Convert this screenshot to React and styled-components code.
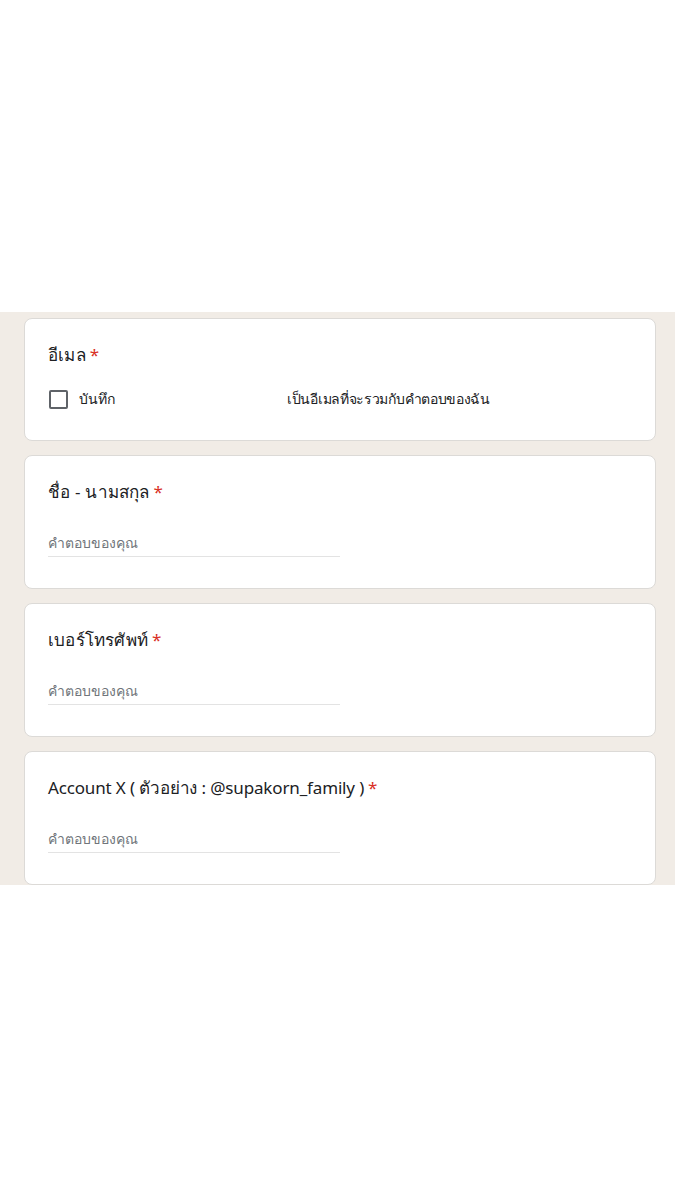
import React from "react";
import styled, { createGlobalStyle } from "styled-components";

const Global = createGlobalStyle`
  html, body {
    margin: 0;
    padding: 0;
    background: #ffffff;
  }
  body {
    font-family: "Noto Sans", "Liberation Sans", sans-serif;
  }
`;

const Page = styled.div`
  width: 675px;
  height: 1200px;
  background: #ffffff;
  padding-top: 312px;
  box-sizing: border-box;
`;

const Form = styled.div`
  background: #f1ece6;
  padding: 6px 19px 0 24px;
  display: flex;
  flex-direction: column;
  gap: 14px;
`;

const Card = styled.div`
  background: #ffffff;
  border: 1px solid #dcdad7;
  border-radius: 8px;
  height: ${(p) => p.h}px;
  box-sizing: border-box;
  padding: 24px 23px 0 23px;
  display: flex;
  flex-direction: column;
`;

const Title = styled.div`
  font-size: 17px;
  line-height: 24px;
  color: #202124;
  letter-spacing: ${(p) => (p.narrow ? "-0.15px" : "0.2px")};
`;

const Star = styled.span`
  color: #d93025;
  margin-left: 4px;
`;

const CheckRow = styled.div`
  display: flex;
  align-items: center;
  margin-top: 20px;
  height: 24px;
`;

const Box = styled.span`
  width: 15px;
  height: 15px;
  border: 2px solid #5f6368;
  border-radius: 2px;
  margin-left: 1px;
`;

const CheckLabel = styled.span`
  font-size: 14px;
  color: #202124;
  margin-left: 11px;
  width: 208px;
`;

const Note = styled.span`
  font-size: 14px;
  color: #202124;
  letter-spacing: -0.3px;
`;

const Input = styled.div`
  margin-top: 29px;
  width: 292px;
  border-bottom: 1px solid #e3e3e3;
  padding-bottom: 3px;
  font-size: 14px;
  line-height: 20px;
  color: #70757a;
`;

const Question = ({ label, narrow }) => (
  <Card h={134}>
    <Title narrow={narrow}>
      {label}
      <Star>*</Star>
    </Title>
    <Input>คำตอบของคุณ</Input>
  </Card>
);

export default function App() {
  return (
    <>
      <Global />
      <Page>
        <Form>
          <Card h={123}>
            <Title>
              อีเมล<Star>*</Star>
            </Title>
            <CheckRow>
              <Box />
              <CheckLabel>บันทึก</CheckLabel>
              <Note>เป็นอีเมลที่จะรวมกับคำตอบของฉัน</Note>
            </CheckRow>
          </Card>
          <Question label="ชื่อ - นามสกุล" />
          <Question label="เบอร์โทรศัพท์" />
          <Question narrow label="Account X ( ตัวอย่าง : @supakorn_family )" />
        </Form>
      </Page>
    </>
  );
}
